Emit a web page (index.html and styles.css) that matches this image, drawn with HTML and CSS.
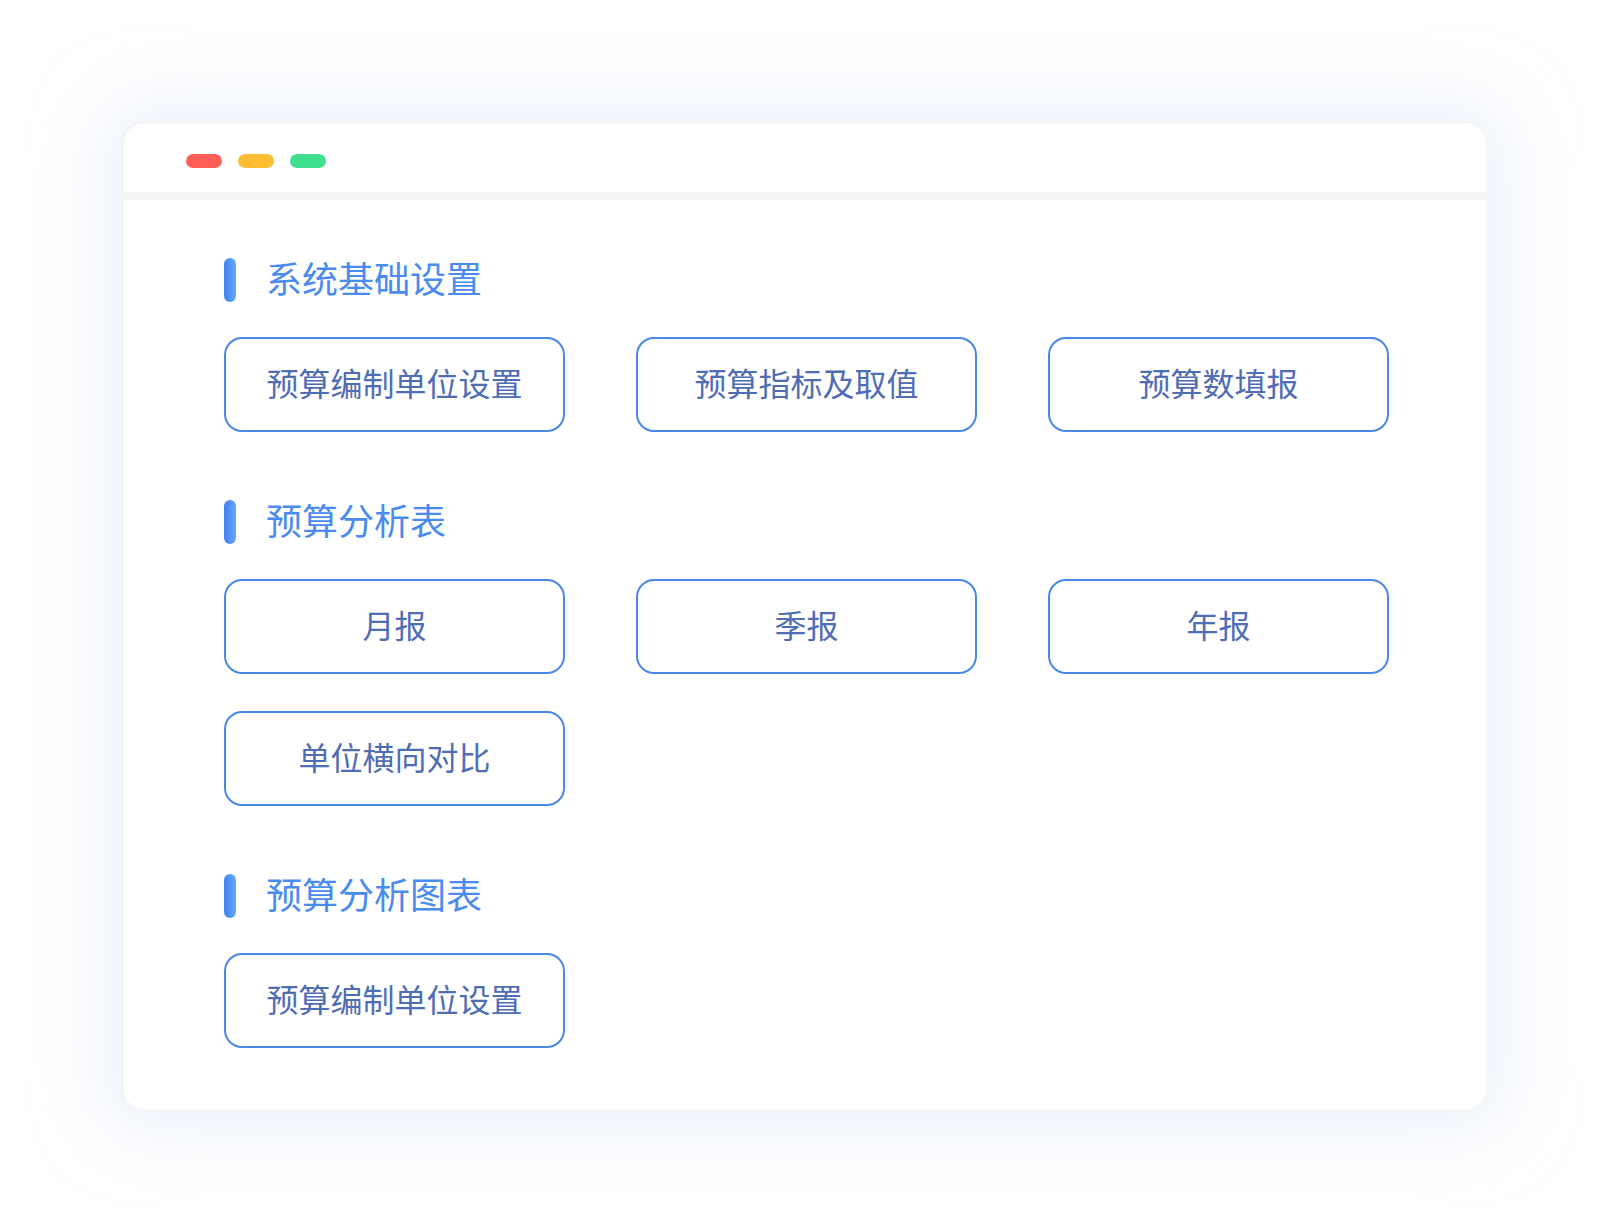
FILE: index.html
```html
<!DOCTYPE html>
<html lang="zh-CN">
<head>
    <meta charset="UTF-8">
    <meta name="viewport" content="width=device-width, initial-scale=1.0">
    <title>预算设置</title>
    <link rel="stylesheet" href="styles.css">
</head>
<body>
    <div class="page">
        <div class="window">
            <div class="window-bar">
                <span class="dot dot-red"></span>
                <span class="dot dot-yellow"></span>
                <span class="dot dot-green"></span>
            </div>
            <div class="divider"></div>

            <div class="content">
                <div class="section">
                    <h2 class="section-title"><span class="mark"></span><span class="title-text">系统基础设置</span></h2>
                    <div class="btn-grid">
                        <button type="button" class="menu-btn">预算编制单位设置</button>
                        <button type="button" class="menu-btn">预算指标及取值</button>
                        <button type="button" class="menu-btn">预算数填报</button>
                    </div>
                </div>

                <div class="section">
                    <h2 class="section-title"><span class="mark"></span><span class="title-text">预算分析表</span></h2>
                    <div class="btn-grid">
                        <button type="button" class="menu-btn">月报</button>
                        <button type="button" class="menu-btn">季报</button>
                        <button type="button" class="menu-btn">年报</button>
                        <button type="button" class="menu-btn">单位横向对比</button>
                    </div>
                </div>

                <div class="section">
                    <h2 class="section-title"><span class="mark"></span><span class="title-text">预算分析图表</span></h2>
                    <div class="btn-grid">
                        <button type="button" class="menu-btn">预算编制单位设置</button>
                    </div>
                </div>
            </div>
        </div>
    </div>
</body>
</html>
```

FILE: styles.css
```css
/* General styles */
body {
    margin: 0;
    font-family: "Noto Sans CJK SC", "Noto Sans", sans-serif;
    background-color: #fff;
}

.page {
    padding: 120px;
}

.window {
    background: #fff;
    border: 4px solid #f5f6f8;
    border-radius: 24px;
    box-shadow: 0 0 70px 14px rgba(214, 226, 248, 0.5);
}

/* Title bar */
.window-bar {
    display: flex;
    gap: 16px;
    height: 68px;
    padding: 30px 0 0 62px;
    box-sizing: border-box;
}

.dot {
    width: 36px;
    height: 14px;
    border-radius: 7px;
}

.dot-red {
    background-color: #ff5e57;
}

.dot-yellow {
    background-color: #febc33;
}

.dot-green {
    background-color: #3fdf8f;
}

.divider {
    height: 8px;
    margin: 0 -4px;
    background-color: #f3f4f6;
}

/* Sections */
.content {
    padding: 58px 100px 61px;
}

.section + .section {
    margin-top: 68px;
}

.section-title {
    display: flex;
    align-items: center;
    gap: 30px;
    height: 44px;
    margin: 0 0 35px;
    font-size: 36px;
    font-weight: normal;
    color: #4a8bf0;
}

.title-text {
    margin-bottom: 6px;
}

.mark {
    width: 12px;
    height: 44px;
    border-radius: 6px;
    background: linear-gradient(to right, #3f82f2, #6aa6ff);
}

.btn-grid {
    display: grid;
    grid-template-columns: repeat(3, 341px);
    column-gap: 71px;
    row-gap: 37px;
}

.menu-btn {
    height: 95px;
    padding: 0 0 6px;
    border: 2px solid #4a88e8;
    border-radius: 18px;
    background: #fff;
    font-family: inherit;
    font-size: 32px;
    color: #4f6db4;
    cursor: pointer;
}
```
